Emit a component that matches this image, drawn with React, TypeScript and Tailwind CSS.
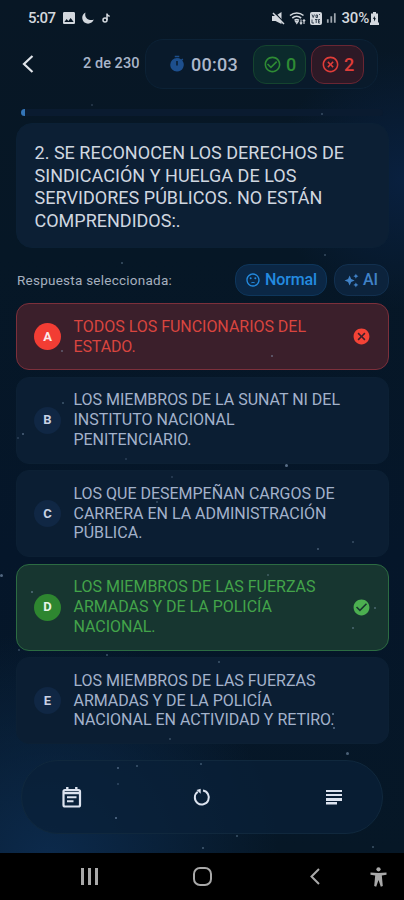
import React from "react";
import {
  MdImage, MdTimer, MdCheckCircleOutline, MdHighlightOff, MdCheckCircle, MdCancel,
  MdAutoAwesome, MdSignalCellularAlt, MdSentimentDissatisfied,
} from "react-icons/md";

type Tone = "wrong" | "right" | "plain";
type Line = [string, number];

const OPTIONS: { letter: string; tone: Tone; lines: Line[] }[] = [
  { letter: "A", tone: "wrong", lines: [["TODOS LOS FUNCIONARIOS DEL", 232.5], ["ESTADO.", 62]] },
  { letter: "B", tone: "plain", lines: [["LOS MIEMBROS DE LA SUNAT NI DEL", 266.5], ["INSTITUTO NACIONAL", 161], ["PENITENCIARIO.", 118]] },
  { letter: "C", tone: "plain", lines: [["LOS QUE DESEMPEÑAN CARGOS DE", 261], ["CARRERA EN LA ADMINISTRACIÓN", 253], ["PÚBLICA.", 69]] },
  { letter: "D", tone: "right", lines: [["LOS MIEMBROS DE LAS FUERZAS", 242], ["ARMADAS Y DE LA POLICÍA", 198.5], ["NACIONAL.", 82]] },
  { letter: "E", tone: "plain", lines: [["LOS MIEMBROS DE LAS FUERZAS", 242], ["ARMADAS Y DE LA POLICÍA", 198.5], ["NACIONAL EN ACTIVIDAD Y RETIRO.", 261]] },
];

const CARD: Record<Tone, string> = {
  wrong: "h-[67px] bg-[#3b1f2b] border-[#7c303b] text-[#d9453f]",
  right: "h-[87px] bg-[#173630] border-[#2c6c42] text-[#43a44a]",
  plain: "h-[87px] bg-[#0b1e33] border-[#0c2034] text-[#a3b2cb]",
};
const BADGE: Record<Tone, string> = {
  wrong: "bg-[#f23d34] text-[#fbe9ea]",
  right: "bg-[#2e8630] text-[#e9f5e9]",
  plain: "bg-[#102744] text-[#c8d2e4]",
};

const STARS: [number, number, number, number][] = [
  [91, 104, 2, 0.25], [321, 113, 2, 0.35], [121, 262, 2, 0.4], [324, 254, 2, 0.35], [61, 350, 2, 0.45],
  [271, 355, 2, 0.5], [62, 402, 2, 0.4], [22, 433, 2, 0.5], [17, 437, 2, 0.25], [125, 458, 2, 0.25],
  [285, 464, 3, 0.6], [171, 476, 2, 0.25], [156, 501, 2, 0.35], [317, 548, 2, 0.45], [352, 541, 2, 0.35],
  [0, 574, 3, 0.55], [31, 591, 2, 0.5], [267, 574, 2, 0.35], [374, 607, 2, 0.45], [352, 627, 2, 0.45],
  [18, 649, 2, 0.35], [106, 654, 2, 0.4], [218, 661, 2, 0.4], [332, 713, 2, 0.7], [333, 727, 2, 0.6],
  [169, 738, 2, 0.35], [346, 752, 3, 0.5], [117, 767, 2, 0.5], [136, 765, 2, 0.4], [200, 763, 2, 0.4],
  [117, 783, 2, 0.3], [115, 817, 2, 0.6], [236, 835, 2, 0.4], [202, 847, 2, 0.45], [372, 846, 2, 0.4],
];

/** A line of text fitted to a measured width by spreading its letters. */
function Fit({ text, width }: { text: string; width: number }) {
  const ref = React.useRef<HTMLSpanElement>(null);
  const [gap, setGap] = React.useState(0);
  React.useLayoutEffect(() => {
    if (!ref.current) return;
    const natural = ref.current.getBoundingClientRect().width;
    setGap((width - natural) / text.length);
  }, [text, width]);
  return (
    <span className="block whitespace-nowrap">
      <span ref={ref} style={{ letterSpacing: gap }}>{text}</span>
    </span>
  );
}

export default function App() {
  return (
    <div className="relative flex h-[900px] w-[404px] flex-col overflow-hidden bg-[#061725] font-['Roboto',sans-serif]">
      <div className="flex flex-1 flex-col bg-[radial-gradient(circle_at_100%_21%,#09203f_0,transparent_130px),radial-gradient(circle_at_12%_101%,#0c2a4c_0,transparent_230px),linear-gradient(#081725,#061726_30%,#05162a_65%,#061726)]">
        <header className="flex h-9 items-center justify-between pl-7 pr-[25px] text-[15px] text-[#d3d8de]">
          <div className="flex items-center font-medium">
            <Fit text="5:07" width={27.5} />
            <MdImage className="ml-[5px] size-4" />
            <svg viewBox="0 0 12 12" className="ml-[5px] size-[12px] fill-current"><path d="M3.500.5C-.5 2.500-.8 8 2.500 10.500c3.300 2.400 8 .9 9.300-3C8 9.500 1.800 6.500 3.500.5z" /></svg>
            <svg viewBox="0 0 8 10" className="ml-[8px] h-[10px] w-[8px] fill-none stroke-current stroke-[1.500]"><circle cx="3" cy="7" r="2" /><path d="M5 7V.5c.2 1.500 1 2.500 2.700 2.700" /></svg>
          </div>
          <div className="flex items-center">
            <svg viewBox="0 0 13 13" className="h-[13px] w-[13px]"><path d="M0 4h3.500L9.500 0v12L3.500 9H0z" className="fill-current" /><path d="m2.500 .5 10.500 11" className="fill-none stroke-[#081725] stroke-[1.200]" /><path d="m1 1 11 11" className="fill-none stroke-current stroke-[1.500]" /></svg>
            <svg viewBox="0 0 17 13" className="ml-[4px] h-[13px] w-[17px] fill-none stroke-current stroke-[1.600]"><path d="M1 3.500c4-3.300 9.500-3.300 13.500 0M3.300 6c2.800-2.200 6-2.200 8.800 0M5.500 8.400c1.500-1 3-1 4.500 0" /><path d="m6.500 9.500 1.300 2 1.300-2zM12 7.500v4M10.800 10.500l1.200 1.500 1.200-1.500M15 12V8M13.800 9 15 7.800 16.200 9" className="stroke-[1.100]" /></svg>
            <svg viewBox="0 0 12 13" className="ml-[4px] h-[13px] w-[12px]"><rect width="12" height="13" rx="2" className="fill-current" /><path d="m2 2.500 1.200 3 1.200-3M6 3v2.500h1.500V3zM9 2.500h1M2 7.500V11h2M5 7.500h2.500M6.200 7.500V11M10 7.500H8.500V11H10M8.500 9.200H10" className="fill-none stroke-[#273645] stroke-[.9]" /></svg>
            <MdSignalCellularAlt className="ml-[2px] mr-[4px] size-[14px] opacity-75" />
            <div className="font-medium"><Fit text="30%" width={27.5} /></div>
            <svg viewBox="0 0 9 13" className="ml-[1px] h-[13px] w-[9px] fill-current"><path d="M3 0h3v1.500h2v9h1V13H0v-2.500h1v-9h2z" /><path d="M4.500 4 3 7h1v2.500L6 6.300H5z" fill="#081725" /></svg>
          </div>
        </header>

        <div className="mt-[3px] flex h-[50px] items-center pl-[22px]">
          <svg viewBox="0 0 12 18" className="h-[18px] w-[12px] fill-none stroke-[#e0e4e9] stroke-[2.200]"><path d="M10.500 1 2 9l8.500 8" /></svg>
          <div className="ml-[49px] w-[62px] text-[14.500px] font-medium text-[#a9b5c9]"><Fit text="2 de 230" width={56.5} /></div>
          <div className="flex h-[50px] w-[233px] items-center rounded-[18px] border border-[#0c2236] bg-[#091a2b] pl-[22px]">
            <MdTimer className="size-[18px] text-[#1d4f8d]" />
            <div className="ml-[5px] w-[62px] text-[18px] font-medium text-[#adb8cb]"><Fit text="00:03" width={47} /></div>
            <div className="flex h-[39px] w-[53px] items-center rounded-[13px] border border-[#15442f] bg-[#0b2a2c] pl-[9px] text-[#2e8b34]">
              <MdCheckCircleOutline className="size-[19px]" /><span className="ml-[4px] text-[18px] font-medium">0</span>
            </div>
            <div className="ml-[5px] flex h-[39px] w-[53px] items-center rounded-[13px] border border-[#6a2633] bg-[#2d1926] pl-[9px] text-[#e03d39]">
              <MdHighlightOff className="size-[19px]" /><span className="ml-[4px] text-[18px] font-medium">2</span>
            </div>
          </div>
        </div>

        <div className="mx-[21px] mt-[20px] h-[7px] rounded-full bg-[#0a1b30]"><div className="h-[7px] w-[4px] rounded-l-full bg-[#3475b7]" /></div>

        <section className="ml-[16px] mr-[15px] mt-[7px] h-[125px] rounded-[16px] border border-[#0b2035] bg-[#0c1f34] pl-[17.500px] pt-[18px] text-[18px] leading-[22.700px] text-[#d0d7e0]">
          <Fit text="2. SE RECONOCEN LOS DERECHOS DE" width={309.5} />
          <Fit text="SINDICACIÓN Y HUELGA DE LOS" width={262} />
          <Fit text="SERVIDORES PÚBLICOS. NO ESTÁN" width={288} />
          <Fit text="COMPRENDIDOS:." width={146} />
        </section>

        <div className="mt-[16px] flex h-[32px] items-center pl-[17px]">
          <div className="w-[218px] text-[13.500px] text-[#a5b0bf]"><Fit text="Respuesta seleccionada:" width={155} /></div>
          <button className="flex h-[32px] w-[92px] items-center rounded-[14px] border border-[#0e365b] bg-[#0b2745] pl-[9px] text-[16px] font-medium text-[#248be0]">
            <MdSentimentDissatisfied className="mr-[4px] size-4" /><Fit text="Normal" width={52} />
          </button>
          <button className="ml-[7px] flex h-[32px] w-[55px] items-center rounded-[14px] border border-[#12304f] bg-[#0c233c] pl-[9px] text-[16px] font-medium text-[#4082c7]">
            <MdAutoAwesome className="mr-[4px] size-[15px]" /><Fit text="AI" width={15} />
          </button>
        </div>

        <main className="ml-[16px] mr-[15px] mt-[7px] flex flex-col gap-[6.500px]">
          {OPTIONS.map((o) => (
            <div key={o.letter} className={`flex items-center rounded-[13px] border pl-[17px] pr-[17px] ${CARD[o.tone]}`}>
              <div className={`flex size-[27px] items-center justify-center rounded-full text-[13px] font-bold ${BADGE[o.tone]}`}>{o.letter}</div>
              <div className="ml-[12.500px] flex-1 text-[16px] leading-[19.700px]">
                {o.lines.map(([t, w]) => <Fit key={t} text={t} width={w} />)}
              </div>
              {o.tone === "wrong" && <MdCancel className="size-[19px] text-[#f44336]" />}
              {o.tone === "right" && <MdCheckCircle className="size-[19px] text-[#4caf50]" />}
            </div>
          ))}
        </main>

        <footer className="mx-[21px] mt-[16px] flex h-[74px] items-center justify-between rounded-full border border-[#10283d] bg-[#0a2038]/75 pl-[40px] pr-[40px] text-[#dce3ef]">
          <svg viewBox="0 0 20 21" className="h-[21px] w-[20px] fill-none stroke-current"><rect x="1.500" y="3" width="16.500" height="16.500" rx="1.500" className="stroke-[2.200]" /><path d="M5.300 0v3M14.300 0v3M1.500 6h16.500" className="stroke-[2.400]" /><path d="M5 10.300h9.500M5 14.300h6.500" className="stroke-[2]" /></svg>
          <svg viewBox="0 0 20 20" className="mr-[4px] size-[20px] fill-none stroke-current stroke-2"><path d="M5.800 4.800A7 7 0 1 0 11 3.600" /><path d="M8.700 6.800V1.800L4.500 3z" className="fill-current stroke-none" /></svg>
          <svg viewBox="0 0 16 15" className="h-[15px] w-[16px] fill-current"><path d="M0 0h16v2H0zM0 4h16v2H0zM0 8h16v3H0zM0 12h11v2.500H0z" /></svg>
        </footer>
      </div>

      <nav className="flex h-[47px] items-center bg-black text-[#a9a9a9]">
        <div className="ml-[81px] flex gap-[4px]"><i className="h-[17px] w-[3px] bg-current" /><i className="h-[17px] w-[3px] bg-current" /><i className="h-[17px] w-[3px] bg-current" /></div>
        <div className="ml-[95px] size-[19px] rounded-[7px] border-[2.500px] border-current" />
        <svg viewBox="0 0 10 17" className="ml-[98px] h-[17px] w-[10px] fill-none stroke-current stroke-2"><path d="M9 1 1.500 8.500 9 16" /></svg>
        <svg viewBox="0 0 17 20" className="ml-[50px] h-[20px] w-[17px] fill-current"><circle cx="8.500" cy="2.300" r="2.100" /><path d="M.5 5.500 8.500 6l8-.5v2.300l-4.700.7 1 10.500-2 .7L8.500 13l-2.300 6.700-2-.7 1-10.500L.5 7.800z" /></svg>
      </nav>

      {STARS.map(([x, y, s, o]) => (
        <i key={`${x}-${y}`} className="absolute rounded-full bg-[#8fa9c6]" style={{ left: x, top: y, width: s, height: s, opacity: o }} />
      ))}
    </div>
  );
}
